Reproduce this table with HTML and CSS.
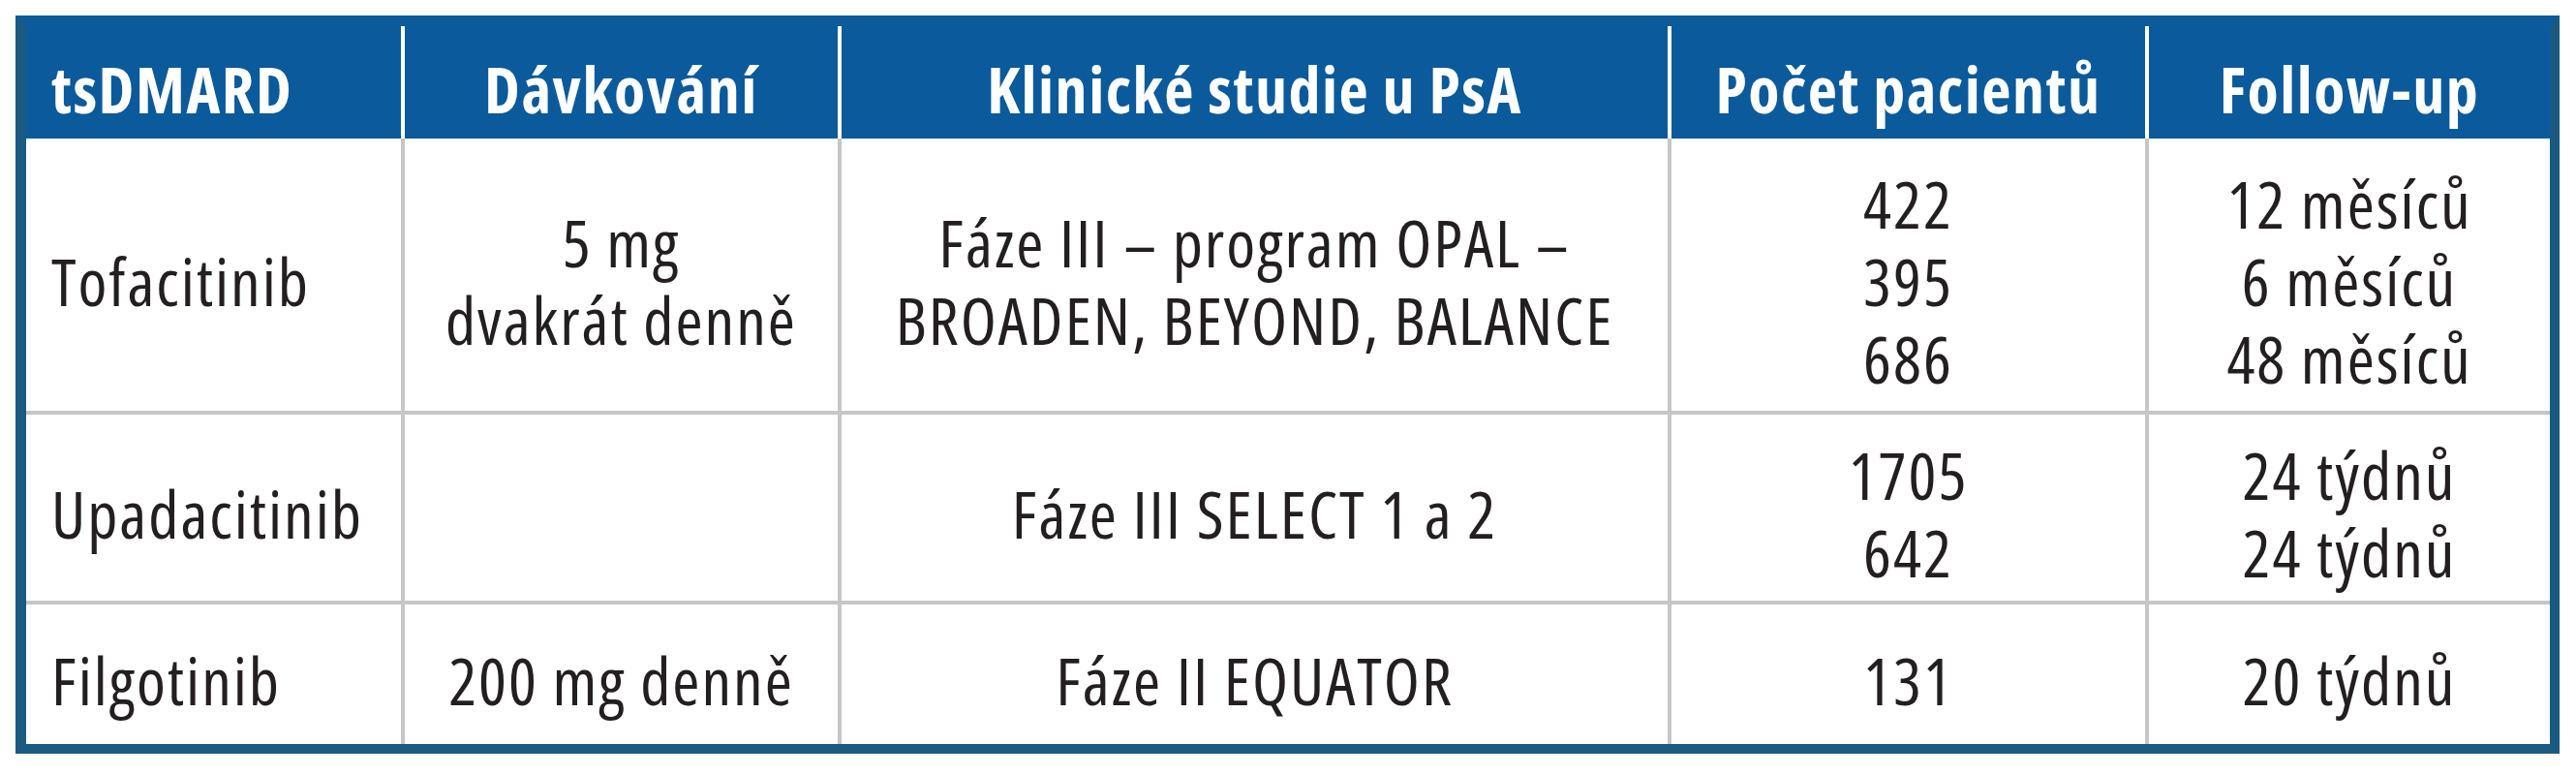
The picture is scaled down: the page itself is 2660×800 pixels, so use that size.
FILE: index.html
```html
<!DOCTYPE html>
<html lang="cs">
<head>
<meta charset="utf-8">
<title>tsDMARD u PsA</title>
<link rel="stylesheet" href="styles.css">
</head>
<body>
<div class="page">
  <table class="tbl">
    <colgroup>
      <col class="c1"><col class="c2"><col class="c3"><col class="c4"><col class="c5">
    </colgroup>
    <thead>
      <tr>
        <th class="left">tsDMARD</th>
        <th>Dávkování</th>
        <th>Klinické studie u PsA</th>
        <th>Počet pacientů</th>
        <th class="last">Follow-up</th>
      </tr>
    </thead>
    <tbody>
      <tr class="r1">
        <td class="left">Tofacitinib</td>
        <td>5 mg<br>dvakrát denně</td>
        <td>Fáze III – program OPAL –<br>BROADEN, BEYOND, BALANCE</td>
        <td>422<br>395<br>686</td>
        <td class="last">12 měsíců<br>6 měsíců<br>48 měsíců</td>
      </tr>
      <tr class="r2">
        <td class="left">Upadacitinib</td>
        <td></td>
        <td>Fáze III SELECT 1 a 2</td>
        <td>1705<br>642</td>
        <td class="last">24 týdnů<br>24 týdnů</td>
      </tr>
      <tr class="r3">
        <td class="left">Filgotinib</td>
        <td>200 mg denně</td>
        <td>Fáze II EQUATOR</td>
        <td>131</td>
        <td class="last">20 týdnů</td>
      </tr>
    </tbody>
  </table>
</div>
</body>
</html>
```

FILE: styles.css
```css
html, body {
  margin: 0;
  padding: 0;
  background: #ffffff;
}

.page {
  padding: 16px 0 0 16px;
}

.tbl {
  width: 2627px;
  table-layout: fixed;
  border-collapse: separate;
  border-spacing: 0;
  border-style: solid;
  border-width: 11px 10px 10px 11px;
  border-color: #0b5a9b #1a5a80 #1a5a80 #1a5a80;
  font-family: "Open Sans", "DejaVu Sans Condensed", sans-serif;
  font-stretch: 75%;
  font-size: 68px;
  letter-spacing: 2px;
  line-height: 80px;
  color: #231f20;
}

.c1 { width: 391px; }
.c2 { width: 451px; }
.c3 { width: 857px; }
.c4 { width: 493px; }
.c5 { width: 414px; }

.tbl th,
.tbl td {
  box-sizing: border-box;
  padding: 12px 0 0 0;
  text-align: center;
  vertical-align: middle;
}

.tbl th {
  height: 116px;
  background: #0b5a9b;
  color: #ffffff;
  font-weight: 700;
  font-size: 66px;
  letter-spacing: 1.5px;
  border-right: 4px solid #ffffff;
  white-space: nowrap;
}

.tbl td {
  background: #ffffff;
  border-right: 4px solid #c6c6c6;
  border-bottom: 4px solid #c6c6c6;
  white-space: nowrap;
}

.tbl .last {
  border-right: 0;
}

.tbl .left {
  text-align: left;
  padding-left: 26px;
}

.r1 td { height: 285px; }
.r2 td { height: 196px; }
.r3 td { height: 144px; border-bottom: 0; }
```
